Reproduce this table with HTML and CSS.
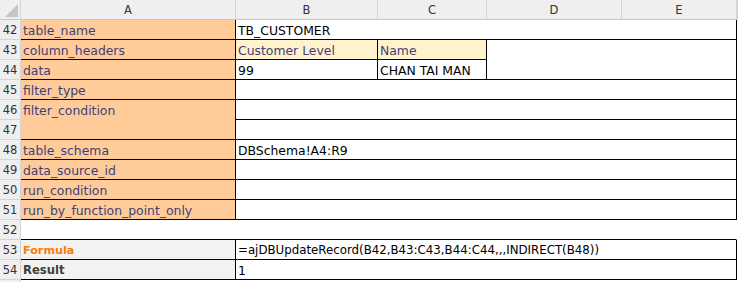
FILE: index.html
```html
<!DOCTYPE html>
<html>
<head>
<meta charset="utf-8">
<link rel="stylesheet" href="styles.css">
</head>
<body>
<div class="sheet">
  <div class="corner"><span class="tri"></span></div>
  <div class="ch">A</div>
  <div class="ch">B</div>
  <div class="ch">C</div>
  <div class="ch">D</div>
  <div class="ch">E</div>
  <div class="ch"></div>

  <div class="rh">42</div>
  <div class="c in">table_name</div>
  <div class="c val s4">TB_CUSTOMER</div>
  <div class="c pad"></div>

  <div class="rh">43</div>
  <div class="c in">column_headers</div>
  <div class="c hd">Customer Level</div>
  <div class="c hd">Name</div>
  <div class="c val s2 r2"></div>
  <div class="c pad"></div>

  <div class="rh">44</div>
  <div class="c in">data</div>
  <div class="c val">99</div>
  <div class="c val">CHAN TAI MAN</div>
  <div class="c pad"></div>

  <div class="rh">45</div>
  <div class="c in">filter_type</div>
  <div class="c val s4"></div>
  <div class="c pad"></div>

  <div class="rh">46</div>
  <div class="c in r2 top">filter_condition</div>
  <div class="c val s4"></div>
  <div class="c pad"></div>

  <div class="rh">47</div>
  <div class="c val s4"></div>
  <div class="c pad"></div>

  <div class="rh">48</div>
  <div class="c in">table_schema</div>
  <div class="c val s4">DBSchema!A4:R9</div>
  <div class="c pad"></div>

  <div class="rh">49</div>
  <div class="c in">data_source_id</div>
  <div class="c val s4"></div>
  <div class="c pad"></div>

  <div class="rh">50</div>
  <div class="c in">run_condition</div>
  <div class="c val s4"></div>
  <div class="c pad"></div>

  <div class="rh">51</div>
  <div class="c in">run_by_function_point_only</div>
  <div class="c val s4"></div>
  <div class="c pad"></div>

  <div class="rh">52</div>
  <div class="c gap s5"></div>
  <div class="c pad"></div>

  <div class="rh">53</div>
  <div class="c calc">Formula</div>
  <div class="c val formula s4">=ajDBUpdateRecord(B42,B43:C43,B44:C44,,,INDIRECT(B48))</div>
  <div class="c pad"></div>

  <div class="rh">54</div>
  <div class="c out">Result</div>
  <div class="c val s4">1</div>
  <div class="c pad"></div>

  <div class="rh"></div>
  <div class="c blank s5"></div>
  <div class="c pad"></div>
</div>
</body>
</html>
```

FILE: styles.css
```css
html, body {
  margin: 0;
  padding: 0;
  background: #ffffff;
  overflow: hidden;
}

.sheet {
  display: grid;
  grid-template-columns: 21px 215px 142px 109px 135px 115px 1px;
  grid-auto-rows: 20px;
  width: 738px;
  font-family: "DejaVu Sans", "Liberation Sans", sans-serif;
}

.sheet > div {
  box-sizing: border-box;
  min-width: 0;
  overflow: hidden;
  white-space: nowrap;
}

.corner {
  background: #efefef;
  border-right: 1px solid #d4d4d4;
  border-bottom: 1px solid #c6c6c6;
  display: flex;
  align-items: flex-end;
  justify-content: flex-end;
  padding: 0 2px 2px 0;
}

.tri {
  display: block;
  width: 13px;
  height: 13px;
  background: #c6c6c6;
  clip-path: polygon(100% 0, 100% 100%, 0 100%);
}

.ch {
  background: #efefef;
  border-right: 1px solid #d4d4d4;
  border-bottom: 1px solid #c6c6c6;
  color: #333333;
  font-size: 11.5px;
  line-height: 20px;
  text-align: center;
}

.rh {
  background: #efefef;
  border-right: 1px solid #d4d4d4;
  border-bottom: 1px solid #d4d4d4;
  color: #333333;
  font-size: 11.5px;
  line-height: 20px;
  text-align: center;
}

.c {
  font-size: 12.4px;
  line-height: 21px;
  padding-left: 2px;
  border-right: 1px solid #000000;
  border-bottom: 1px solid #000000;
  color: #000000;
}

.formula {
  font-size: 11.8px;
}

.in {
  background: #ffcc99;
  color: #3f3f76;
}

.hd {
  background: #fff2cc;
  color: #3f3f76;
}

.val {
  background: #ffffff;
}

.calc {
  background: #f2f2f2;
  color: #fa7d00;
  font-weight: bold;
  font-size: 11.2px;
}

.out {
  background: #f2f2f2;
  color: #3f3f3f;
  font-weight: bold;
  font-size: 11.6px;
}

.gap {
  background: #ffffff;
  border-right-color: #ffffff;
}

.blank {
  background: #ffffff;
  border-right-color: #ffffff;
  border-bottom-color: #ffffff;
}

.pad {
  background: #ffffff;
  border: none;
  padding: 0;
}

.s2 { grid-column: span 2; }
.s4 { grid-column: span 4; }
.s5 { grid-column: span 5; }
.r2 { grid-row: span 2; }
.top { align-self: stretch; }
```
